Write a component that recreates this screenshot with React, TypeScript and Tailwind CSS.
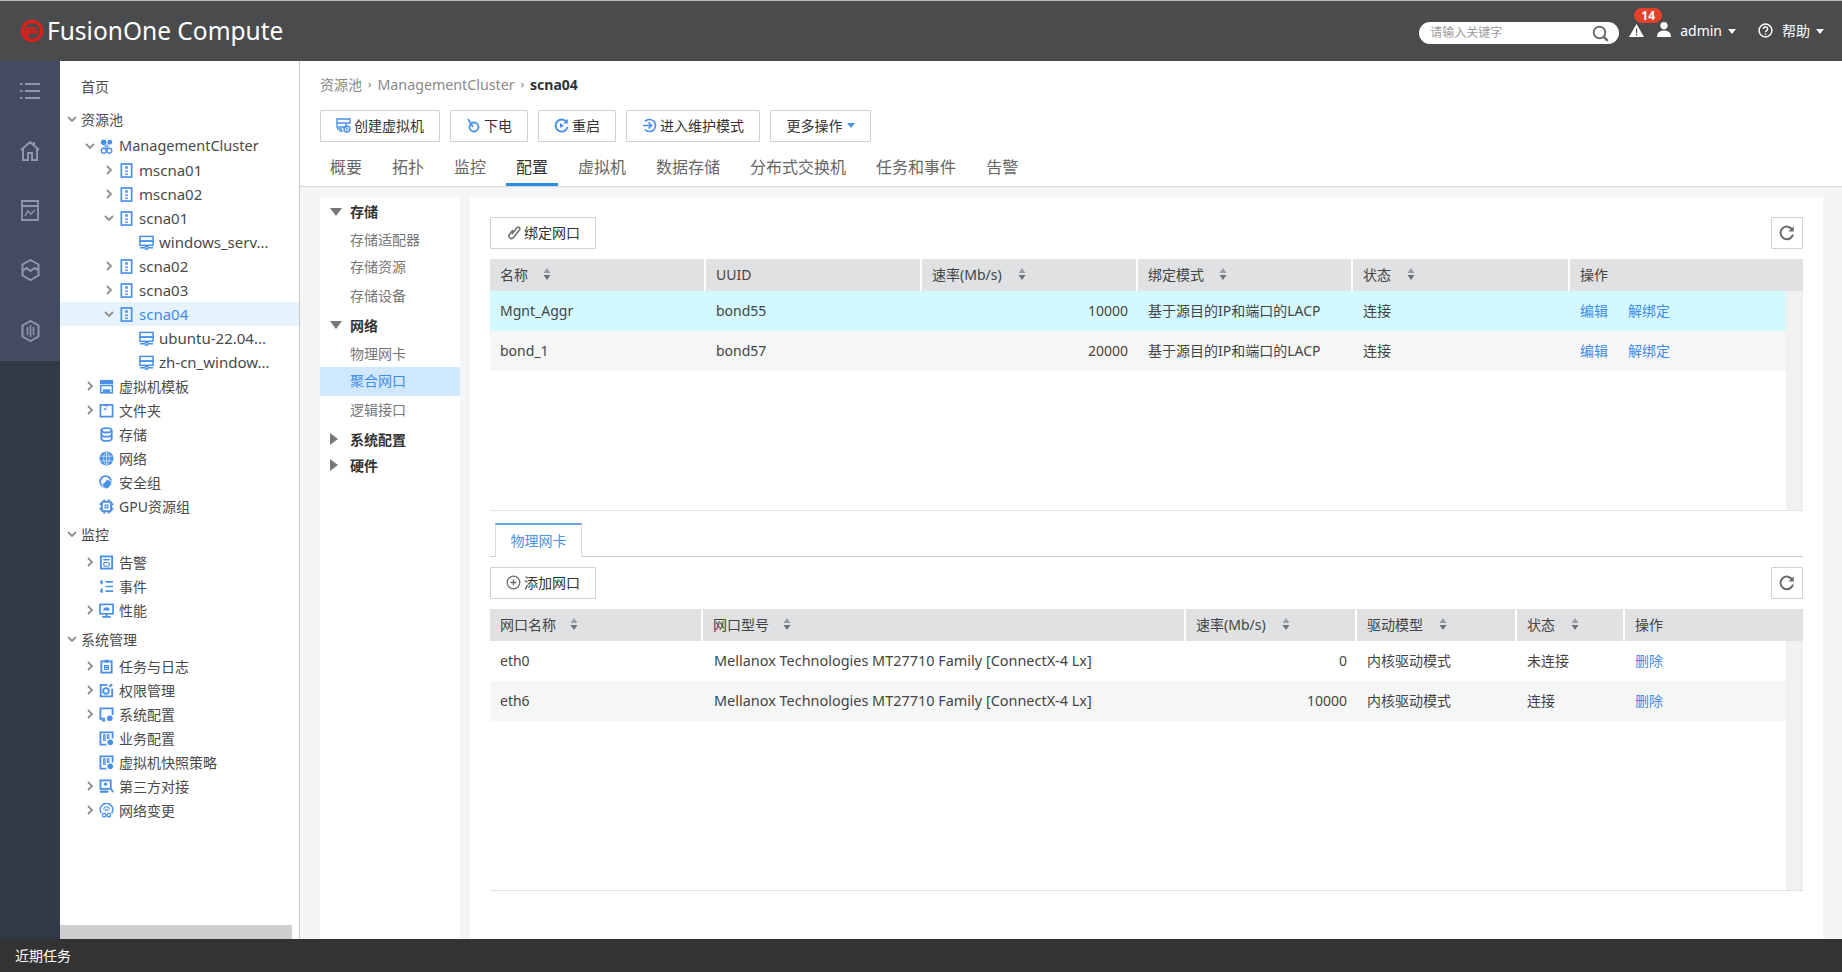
import React from "react";

const B = "#4a90e8";

function Ico({ children, size = 15, className = "" }: { children: React.ReactNode; size?: number; className?: string }) {
  return (
    <svg width={size} height={size} viewBox="0 0 16 16" fill="none" stroke={B} strokeWidth={2} className={"shrink-0 " + className}>
      {children}
    </svg>
  );
}

const icons: Record<string, React.ReactNode> = {
  cluster: (
    <>
      <circle cx="5" cy="3.5" r="3" fill={B} stroke="none" />
      <circle cx="11.5" cy="3.5" r="2.6" fill={B} stroke="none" />
      <circle cx="8" cy="8" r="2.4" fill="#7fb5f2" stroke="none" />
      <circle cx="5" cy="12.5" r="2.6" strokeWidth="1.5" />
      <circle cx="11" cy="12.5" r="2.6" strokeWidth="1.5" />
    </>
  ),
  host: (
    <>
      <rect x="2.5" y="1" width="11" height="14" strokeWidth="1.8" />
      <rect x="6.6" y="3.5" width="2.8" height="2.6" fill={B} stroke="none" />
      <rect x="6.6" y="8" width="2.8" height="1.6" fill={B} stroke="none" />
      <rect x="6.6" y="11" width="2.8" height="1.6" fill={B} stroke="none" />
    </>
  ),
  vm: (
    <>
      <rect x="1" y="1.5" width="14" height="5" strokeWidth="1.6" />
      <rect x="1" y="6.5" width="14" height="4.5" strokeWidth="1.6" />
      <path d="M1 13.5h5M10 13.5h5" strokeWidth="1.6" />
      <circle cx="8" cy="13.5" r="1.6" strokeWidth="1.6" />
    </>
  ),
  template: (
    <>
      <rect x="1" y="1" width="14" height="4.5" fill={B} stroke="none" />
      <rect x="1.8" y="7" width="12.4" height="7.8" strokeWidth="1.6" />
      <path d="M4 11h8v3.5H4z" fill={B} stroke="none" />
    </>
  ),
  folder: (
    <>
      <path d="M1.5 2h13v12.5h-13z" strokeWidth="1.8" />
      <path d="M5 6.5h3" strokeWidth="1.6" />
      <path d="M8 2v2" />
    </>
  ),
  db: (
    <>
      <ellipse cx="8" cy="3.5" rx="5.5" ry="2.3" />
      <path d="M2.5 3.5v9c0 1.3 2.4 2.3 5.5 2.3s5.5-1 5.5-2.3v-9M2.5 8c0 1.3 2.4 2.3 5.5 2.3s5.5-1 5.5-2.3" />
    </>
  ),
  globe: (
    <>
      <circle cx="8" cy="8" r="7.5" fill={B} stroke="none" />
      <g stroke="#cfe3fb" strokeWidth="0.9">
        <ellipse cx="8" cy="8" rx="3" ry="6.5" />
        <path d="M1.5 5.5h13M1.5 10.5h13M8 1v14" />
      </g>
    </>
  ),
  shield: (
    <>
      <circle cx="7" cy="7" r="5.8" />
      <path d="M8 4.5l5.5 2c0 4-2 7-5.5 8.5-2.5-1-4.5-3-5-6 2 .5 4-1.5 5-4.5z" fill={B} stroke="#fff" strokeWidth="0.8" />
    </>
  ),
  chip: (
    <>
      <rect x="3" y="3" width="10" height="10" rx="2" strokeWidth="2.2" />
      <rect x="6.5" y="6.5" width="3" height="3" strokeWidth="1.3" />
      <path d="M5.5 0.5v2M10.5 0.5v2M5.5 13.5v2M10.5 13.5v2M0.5 5.5h2M0.5 10.5h2M13.5 5.5h2M13.5 10.5h2" />
    </>
  ),
  alarm: (
    <>
      <rect x="2" y="1.5" width="12" height="13" />
      <path d="M4.5 5h7" strokeWidth="1.6" />
      <rect x="5" y="8" width="6" height="4" rx="1.5" strokeWidth="1.3" />
    </>
  ),
  events: (
    <>
      <path d="M7 3h8M7 8h8M7 13h8" strokeWidth="1.8" />
      <path d="M3 1.5v4M3 10v4.5" />
      <path d="M1.2 4l1.8-2.5M1.2 12l1.8 2.5" strokeWidth="1.3" />
    </>
  ),
  monitor: (
    <>
      <rect x="1" y="1.5" width="14" height="10" strokeWidth="1.8" />
      <path d="M8 11.5v2.5M3.5 14.8h9" />
      <path d="M4.5 8a3.5 3.5 0 0 1 7 0z" fill={B} stroke="none" />
    </>
  ),
  task: (
    <>
      <rect x="2.5" y="2.5" width="11" height="12" />
      <path d="M6 .8h4v3.2H6z" fill={B} stroke="none" />
      <path d="M6 7h4v4H6zM6 9h4" strokeWidth="1.3" />
    </>
  ),
  perm: (
    <>
      <path d="M14 6v8.2H1.8V2H9" />
      <circle cx="7.5" cy="8.5" r="3" />
      <path d="M11 4l3-2.5" strokeWidth="2.4" />
    </>
  ),
  sys: (
    <>
      <path d="M6.5 12.5H1.5v-11h13v7" />
      <path d="M3 14.5h3.5" />
      <circle cx="11.5" cy="12" r="3" fill={B} stroke="none" />
    </>
  ),
  svc: (
    <>
      <path d="M8 14.5H1.5v-13h13V8" />
      <path d="M5 4h1.5v6H5zM9 4h1.5v4H9z" strokeWidth="1.2" />
      <circle cx="12" cy="12" r="3" fill={B} stroke="none" />
    </>
  ),
  third: (
    <>
      <rect x="1.5" y="1.5" width="11" height="9" />
      <circle cx="7" cy="5.5" r="1.8" fill={B} stroke="none" />
      <path d="M1 13.5h9" strokeWidth="2.4" />
      <path d="M13 11l2 3" />
    </>
  ),
  change: (
    <>
      <path d="M2.5 11A6.7 6.7 0 1 1 13.5 11" strokeWidth="1.7" />
      <path d="M5 7a3 3 0 0 1 6 0M6.5 8.5a1.5 1.5 0 0 1 3 0" strokeWidth="1.2" />
      <circle cx="5.5" cy="13" r="1.9" strokeWidth="1.4" />
      <circle cx="10.5" cy="13" r="1.9" strokeWidth="1.4" />
    </>
  ),
};

function Chevron({ open }: { open?: boolean }) {
  return (
    <svg width="12" height="12" viewBox="0 0 12 12" fill="none" stroke="#8f8f8f" strokeWidth="1.8" className="shrink-0">
      {open ? <path d="M2 4l4 4 4-4" /> : <path d="M4 2l4 4-4 4" />}
    </svg>
  );
}

type Row = { t: string; l: number; i?: string; c?: "o" | "c"; mt?: string; sel?: boolean };
const tree: Row[] = [
  { t: "首页", l: 0 },
  { t: "资源池", l: 0, c: "o", mt: "mt-[9px]" },
  { t: "ManagementCluster", l: 1, c: "o", i: "cluster", mt: "mt-[3px]" },
  { t: "mscna01", l: 2, c: "c", i: "host" },
  { t: "mscna02", l: 2, c: "c", i: "host" },
  { t: "scna01", l: 2, c: "o", i: "host" },
  { t: "windows_serv...", l: 3, i: "vm" },
  { t: "scna02", l: 2, c: "c", i: "host" },
  { t: "scna03", l: 2, c: "c", i: "host" },
  { t: "scna04", l: 2, c: "o", i: "host", sel: true },
  { t: "ubuntu-22.04...", l: 3, i: "vm" },
  { t: "zh-cn_window...", l: 3, i: "vm" },
  { t: "虚拟机模板", l: 1, c: "c", i: "template" },
  { t: "文件夹", l: 1, c: "c", i: "folder" },
  { t: "存储", l: 1, i: "db" },
  { t: "网络", l: 1, i: "globe" },
  { t: "安全组", l: 1, i: "shield" },
  { t: "GPU资源组", l: 1, i: "chip" },
  { t: "监控", l: 0, c: "o", mt: "mt-[4px]" },
  { t: "告警", l: 1, c: "c", i: "alarm", mt: "mt-[4px]" },
  { t: "事件", l: 1, i: "events" },
  { t: "性能", l: 1, c: "c", i: "monitor" },
  { t: "系统管理", l: 0, c: "o", mt: "mt-[5px]" },
  { t: "任务与日志", l: 1, c: "c", i: "task", mt: "mt-[3px]" },
  { t: "权限管理", l: 1, c: "c", i: "perm" },
  { t: "系统配置", l: 1, c: "c", i: "sys" },
  { t: "业务配置", l: 1, i: "svc" },
  { t: "虚拟机快照策略", l: 1, i: "svc" },
  { t: "第三方对接", l: 1, c: "c", i: "third" },
  { t: "网络变更", l: 1, c: "c", i: "change" },
];

function TreeRow({ r }: { r: Row }) {
  const pad = ["pl-[6px]", "pl-[24px]", "pl-[43px]", "pl-[79px]"][r.l];
  const iconGap = ["", "ml-[3px]", "ml-[4px]", ""][r.l];
  const size = r.l >= 2 ? "text-[15px]" : r.t === "ManagementCluster" ? "text-[14.5px]" : "";
  return (
    <div className={"flex h-6 items-center whitespace-nowrap " + pad + " " + (r.mt || "") + (r.sel ? " bg-[#e6f3fd] text-[#3d8ee8]" : " text-[#4a4a4a]")}>
      {r.c ? <Chevron open={r.c === "o"} /> : r.l !== 3 ? <span className="w-3 shrink-0" /> : null}
      {r.i ? (
        <span className={"mr-[5px] flex " + iconGap}>
          <Ico>{icons[r.i]}</Ico>
        </span>
      ) : (
        <span className="w-[3px]" />
      )}
      <span className={size}>{r.t}</span>
    </div>
  );
}

function Sort() {
  return (
    <svg width="8" height="14" viewBox="0 0 8 14" className="shrink-0">
      <path d="M4 1l3.5 5h-7z" fill="#9a9ea2" />
      <path d="M4 13L.5 8h7z" fill="#6f7377" />
    </svg>
  );
}

function Caret({ color = "#fff" }: { color?: string }) {
  return (
    <svg width="8" height="5" viewBox="0 0 8 5" className="shrink-0">
      <path d="M0 0h8L4 5z" fill={color} />
    </svg>
  );
}

function Btn({ w, icon, label, gap = "gap-[3px]" }: { w: string; icon?: React.ReactNode; label: React.ReactNode; gap?: string }) {
  return (
    <button className={"flex h-8 items-center justify-center rounded-[1px] border border-[#d0d3d6] bg-white pb-[2px] text-[#333] " + w + " " + gap}>
      {icon}
      {label}
    </button>
  );
}

function Refresh() {
  return (
    <button className="flex h-8 w-8 items-center justify-center rounded-[1px] border border-[#d0d3d6] bg-white">
      <svg width="16" height="16" viewBox="0 0 16 16" fill="none" stroke="#6b6b6b" strokeWidth="2">
        <path d="M13.5 5A6.3 6.3 0 1 0 14 9.5" />
        <path d="M14.8 1.2v5.2H9.6z" fill="#6b6b6b" stroke="none" />
      </svg>
    </button>
  );
}

function Head({ label, sort = true, gap = "ml-[15px]" }: { label: string; sort?: boolean; gap?: string }) {
  return (
    <div className="flex h-8 items-center border-r-2 border-white pb-[2px] pl-[10px] text-[#444] last:border-r-0">
      <span>{label}</span>
      {sort && <span className={"flex " + gap}><Sort /></span>}
    </div>
  );
}

const sideNav: { t: string; k: "h-o" | "h-c" | "i" | "sel"; h: string }[] = [
  { t: "存储", k: "h-o", h: "h-[29px]" },
  { t: "存储适配器", k: "i", h: "h-[26px]" },
  { t: "存储资源", k: "i", h: "h-[29px]" },
  { t: "存储设备", k: "i", h: "h-[29px]" },
  { t: "网络", k: "h-o", h: "h-[30px]" },
  { t: "物理网卡", k: "i", h: "h-[26px]" },
  { t: "聚合网口", k: "sel", h: "h-[29px]" },
  { t: "逻辑接口", k: "i", h: "h-[29px]" },
  { t: "系统配置", k: "h-c", h: "h-[30px]" },
  { t: "硬件", k: "h-c", h: "h-[22px]" },
];

const tabs = ["概要", "拓扑", "监控", "配置", "虚拟机", "数据存储", "分布式交换机", "任务和事件", "告警"];

export default function App() {
  return (
    <div className="flex h-[972px] w-[1842px] flex-col overflow-hidden bg-white font-['Noto_Sans','Noto_Sans_CJK_SC',sans-serif] text-[14px] text-[#444]">
      {/* top bar */}
      <header className="flex h-[61px] shrink-0 items-center border-t border-[#bdbdbd] bg-[#4a4b4d] text-white">
        <div className="ml-[20px] flex items-center gap-[4px]">
          <svg width="23" height="24" viewBox="0 0 23 24" fill="none">
            <circle cx="12" cy="12" r="9.5" stroke="#d8211f" strokeWidth="3.4" />
            <path d="M1 13h17" stroke="#d8211f" strokeWidth="3" />
            <path d="M7 9.5h9" stroke="#d8211f" strokeWidth="2.4" />
            <path d="M7 9v11" stroke="#d8211f" strokeWidth="3" />
          </svg>
          <span className="text-[24.5px] leading-none">FusionOne Compute</span>
        </div>
        <div className="ml-auto flex items-center">
          <div className="mt-[4px] flex h-[22px] w-[200px] items-center justify-between rounded-full bg-white pl-[11px] pr-[10px] text-[12px] text-[#9a9a9a]">
            <span>请输入关键字</span>
            <svg width="17" height="17" viewBox="0 0 17 17" fill="none" stroke="#6a6a6a" strokeWidth="1.9">
              <circle cx="7.5" cy="7.5" r="5.8" />
              <path d="M11.8 11.8l4 4" strokeWidth="2.4" />
            </svg>
          </div>
          <div className="relative mb-[1px] ml-[10px]">
            <svg width="15" height="13" viewBox="0 0 15 13" className="block">
              <path d="M7.5 0L15 13H0z" fill="#fff" />
              <path d="M7 4.5h1.2v4.5H7zM7 10h1.2v1.4H7z" fill="#4a4b4d" />
            </svg>
            <span className="absolute left-[5px] top-[-16px] flex h-[15px] w-[28px] items-center justify-center rounded-full bg-[#e4402a] text-[12px] font-bold leading-none">14</span>
          </div>
          <svg width="14" height="15" viewBox="0 0 14 15" className="mb-[3px] ml-[13px]">
            <circle cx="7" cy="3.6" r="3.6" fill="#fff" />
            <path d="M0 15c0-4.6 2.6-6.6 7-6.6s7 2 7 6.6z" fill="#fff" />
          </svg>
          <span className="mb-[1px] ml-[9px] text-[14px] leading-none">admin</span>
          <span className="ml-[6px]"><Caret /></span>
          <svg width="15" height="15" viewBox="0 0 15 15" fill="none" stroke="#fff" strokeWidth="1.5" className="mb-[1px] ml-[22px]">
            <circle cx="7.5" cy="7.5" r="6.4" />
            <path d="M5.4 6a2.1 2.1 0 1 1 3.3 1.7c-.8.5-1.2.8-1.2 1.6" />
            <path d="M7.5 10.6v1.2" />
          </svg>
          <span className="mb-[1px] ml-[9px] leading-none">帮助</span>
          <span className="ml-[6px] mr-[18px]"><Caret /></span>
        </div>
      </header>

      {/* middle */}
      <div className="flex min-h-0 flex-1">
        {/* rail */}
        <nav className="flex w-[60px] shrink-0 flex-col bg-[#333846]">
          <div className="flex h-[300px] flex-col items-center bg-[#424b5f] pt-[21px]">
            <svg width="20" height="18" viewBox="0 0 20 18" stroke="#8f97aa" strokeWidth="2.2" fill="none">
              <path d="M5 2h15M5 9h15M5 16h15M0 2h2.5M0 9h2.5M0 16h2.5" />
            </svg>
            <svg width="20" height="22" viewBox="0 0 20 22" stroke="#8f97aa" strokeWidth="2" fill="none" className="mt-[39px]">
              <path d="M1 11l9-8 9 8M3 10v11h5v-7h4v7h5V10M14 3v3" />
            </svg>
            <svg width="18" height="21" viewBox="0 0 18 21" stroke="#8f97aa" strokeWidth="1.8" fill="none" className="mt-[39px]">
              <path d="M1 1h16v19H1zM1 6h16" />
              <path d="M4 16l3-5 3 3 4-4" strokeWidth="1.4" />
            </svg>
            <svg width="19" height="22" viewBox="0 0 19 22" stroke="#8f97aa" strokeWidth="2" fill="none" className="mt-[38px]">
              <path d="M9.5 1l8 4.5v11l-8 4.5-8-4.5v-11z" />
              <path d="M1.5 12l4-3 4 3 4 -3 4 2" />
            </svg>
            <svg width="19" height="22" viewBox="0 0 19 22" stroke="#8f97aa" strokeWidth="2" fill="none" className="mt-[39px]">
              <path d="M9.5 1l8 4.5v11l-8 4.5-8-4.5v-11z" />
              <path d="M6.5 7v8M9.5 5v12M12.5 7v8" strokeWidth="1.6" />
            </svg>
          </div>
        </nav>

        {/* tree */}
        <aside className="flex w-[240px] shrink-0 flex-col border-r border-[#c9c9c9] bg-white">
          <div className="min-h-0 flex-1 pt-[13px]">
            {tree.map((r) => (
              <TreeRow key={r.t + r.l} r={r} />
            ))}
          </div>
          <div className="h-[14px] w-[232px] bg-[#cfcfcf]" />
        </aside>

        {/* content */}
        <main className="flex min-w-0 flex-1 flex-col">
          <div className="h-[126px] shrink-0 border-b border-[#d6d6d6] pl-[20px]">
            <div className="flex h-[49px] items-center pb-[2px] text-[#888]">
              <span>资源池</span>
              <span className="mx-[6px] text-[11px] text-[#777]">›</span>
              <span className="text-[14.25px]">ManagementCluster</span>
              <span className="mx-[6px] text-[11px] text-[#777]">›</span>
              <span className="font-bold text-[#333]">scna04</span>
            </div>
            <div className="flex gap-[10px]">
              <Btn
                w="w-[120px]"
                label="创建虚拟机"
                icon={
                  <svg width="15" height="15" viewBox="0 0 15 15" fill="none" stroke={B} strokeWidth="1.4">
                    <path d="M1 1h13v4H1zM1 5h9v4H1zM1 11h5M3 13h4" />
                    <circle cx="11" cy="11" r="3" />
                    <path d="M11 9.5v3M9.5 11h3" strokeWidth="1" />
                  </svg>
                }
              />
              <Btn
                w="w-[78px]"
                label="下电"
                icon={
                  <svg width="15" height="15" viewBox="0 0 15 15" fill="none" stroke={B} strokeWidth="1.8">
                    <circle cx="8" cy="9" r="4.5" />
                    <path d="M2 1l5 8" />
                  </svg>
                }
              />
              <Btn
                w="w-[78px]"
                label="重启"
                icon={
                  <svg width="15" height="15" viewBox="0 0 15 15" fill="none" stroke={B} strokeWidth="1.9">
                    <path d="M12.5 4A6 6 0 1 0 13.5 9" />
                    <path d="M13.8 .8v4.6h-4.6z" fill={B} stroke="none" />
                    <path d="M6 5l4 2.5L6 10z" fill={B} stroke="none" />
                  </svg>
                }
              />
              <Btn
                w="w-[134px]"
                label="进入维护模式"
                icon={
                  <svg width="15" height="15" viewBox="0 0 15 15" fill="none" stroke={B} strokeWidth="1.7">
                    <path d="M3 3.5A6 6 0 1 1 3 11.5" />
                    <path d="M1 7.5h8M6.5 4.5l3 3-3 3" />
                  </svg>
                }
              />
              <Btn
                w="w-[101px]"
                label={
                  <span className="flex items-center gap-[4px]">
                    更多操作
                    <Caret color="#4a90e8" />
                  </span>
                }
              />
            </div>
            <div className="flex h-[44px] items-center pl-[10px] pt-[5px] text-[16px] text-[#666]">
              {tabs.map((t) => (
                <span
                  key={t}
                  className={
                    "relative mr-[30px] flex h-full items-center " +
                    (t === "配置" ? "text-[#333] before:absolute before:-left-[10px] before:-right-[10px] before:bottom-0 before:h-[3px] before:bg-[#2b8ae4] before:content-['']" : "")
                  }
                >
                  {t}
                </span>
              ))}
            </div>
          </div>

          <div className="flex min-h-0 flex-1 gap-[10px] bg-[#f4f5f7] pl-[20px] pr-[19px] pt-[10px]">
            {/* side nav */}
            <div className="w-[140px] shrink-0 bg-white pt-[1px]">
              {sideNav.map((n) => (
                <div
                  key={n.t + n.k}
                  className={
                    "flex items-center pb-[2px] " +
                    n.h +
                    (n.k === "sel" ? " bg-[#d0e8fd] pl-[30px] text-[#3d8ee8]" : n.k === "i" ? " pl-[30px] text-[#777]" : " pl-[10px] font-bold text-[#333]")
                  }
                >
                  {n.k === "h-o" && (
                    <svg width="12" height="8" viewBox="0 0 12 8" className="mr-[8px]">
                      <path d="M0 0h12L6 8z" fill="#777" />
                    </svg>
                  )}
                  {n.k === "h-c" && (
                    <svg width="8" height="12" viewBox="0 0 8 12" className="mr-[12px]">
                      <path d="M0 0l8 6-8 6z" fill="#777" />
                    </svg>
                  )}
                  {n.t}
                </div>
              ))}
            </div>

            {/* main panel */}
            <div className="min-w-0 flex-1 bg-white px-[20px] pt-[20px]">
              <div className="flex justify-between">
                <Btn
                  w="w-[106px]"
                  label="绑定网口"
                  icon={
                    <svg width="15" height="15" viewBox="0 0 15 15" fill="none" stroke="#6b6b6b" strokeWidth="1.5">
                      <path d="M6 9l5-6.5a1.8 1.8 0 0 1 2.6 2.4L7.5 12.5a2.5 2.5 0 0 1-4-3L7 5" />
                    </svg>
                  }
                />
                <Refresh />
              </div>

              <div className="mt-[10px] grid h-8 grid-cols-[216px_216px_216px_215px_217px_1fr] bg-[#dfe1e3]">
                <Head label="名称" gap="ml-[15px]" />
                <Head label="UUID" sort={false} />
                <Head label="速率(Mb/s)" gap="ml-[16px]" />
                <Head label="绑定模式" gap="ml-[15px]" />
                <Head label="状态" gap="ml-[16px]" />
                <Head label="操作" sort={false} />
              </div>
              <div className="flex h-[220px] border-b border-[#e3e3e3]">
                <div className="min-w-0 flex-1">
                  {[
                    ["Mgnt_Aggr", "bond55", "10000", "bg-[#d3f9ff]"],
                    ["bond_1", "bond57", "20000", "bg-[#f5f7f7]"],
                  ].map((r) => (
                    <div key={r[0]} className={"grid h-10 grid-cols-[216px_216px_216px_215px_217px_1fr] items-center pb-[1px] text-[#444] " + r[3]}>
                      <span className="pl-[10px]">{r[0]}</span>
                      <span className="pl-[10px]">{r[1]}</span>
                      <span className="pr-[10px] text-right">{r[2]}</span>
                      <span className="pl-[10px]">基于源目的IP和端口的LACP</span>
                      <span className="pl-[10px]">连接</span>
                      <span className="pl-[10px] text-[#3f8ce8]">
                        编辑<span className="ml-[20px]">解绑定</span>
                      </span>
                    </div>
                  ))}
                </div>
                <div className="w-[17px] shrink-0 bg-[#f1f1f1]" />
              </div>

              <div className="mt-[12px] h-[34px] border-b border-[#c9cdd1] pl-[5px]">
                <div className="flex h-[34px] w-[87px] items-center justify-center border-x border-t-2 border-x-[#d8dbde] border-t-[#6aa5e6] bg-white pb-[2px] text-[#4a94e8]">
                  物理网卡
                </div>
              </div>

              <div className="mt-[10px] flex justify-between">
                <Btn
                  w="w-[106px]"
                  label="添加网口"
                  icon={
                    <svg width="15" height="15" viewBox="0 0 15 15" fill="none" stroke="#6b6b6b" strokeWidth="1.3">
                      <circle cx="7.5" cy="7.5" r="6.3" />
                      <path d="M7.5 4.5v6M4.5 7.5h6" />
                    </svg>
                  }
                />
                <Refresh />
              </div>

              <div className="mt-[10px] grid h-8 grid-cols-[213px_483px_171px_160px_108px_1fr] bg-[#dfe1e3]">
                <Head label="网口名称" gap="ml-[14px]" />
                <Head label="网口型号" gap="ml-[14px]" />
                <Head label="速率(Mb/s)" gap="ml-[16px]" />
                <Head label="驱动模型" gap="ml-[16px]" />
                <Head label="状态" gap="ml-[16px]" />
                <Head label="操作" sort={false} />
              </div>
              <div className="flex h-[250px] border-b border-[#e3e3e3]">
                <div className="min-w-0 flex-1">
                  {[
                    ["eth0", "0", "未连接", "bg-white"],
                    ["eth6", "10000", "连接", "bg-[#f5f7f7]"],
                  ].map((r) => (
                    <div key={r[0]} className={"grid h-10 grid-cols-[213px_483px_171px_160px_108px_1fr] items-center pb-[1px] text-[#444] " + r[3]}>
                      <span className="pl-[10px]">{r[0]}</span>
                      <span className="pl-[11px] text-[14.45px]">Mellanox Technologies MT27710 Family [ConnectX-4 Lx]</span>
                      <span className="pr-[10px] text-right">{r[1]}</span>
                      <span className="pl-[10px]">内核驱动模式</span>
                      <span className="pl-[10px]">{r[2]}</span>
                      <span className="pl-[10px] text-[#3f8ce8]">删除</span>
                    </div>
                  ))}
                </div>
                <div className="w-[17px] shrink-0 bg-[#f1f1f1]" />
              </div>
            </div>
          </div>
        </main>
      </div>

      {/* bottom bar */}
      <footer className="flex h-[33px] shrink-0 items-center bg-[#333333] pl-[15px] text-white">近期任务</footer>
    </div>
  );
}
